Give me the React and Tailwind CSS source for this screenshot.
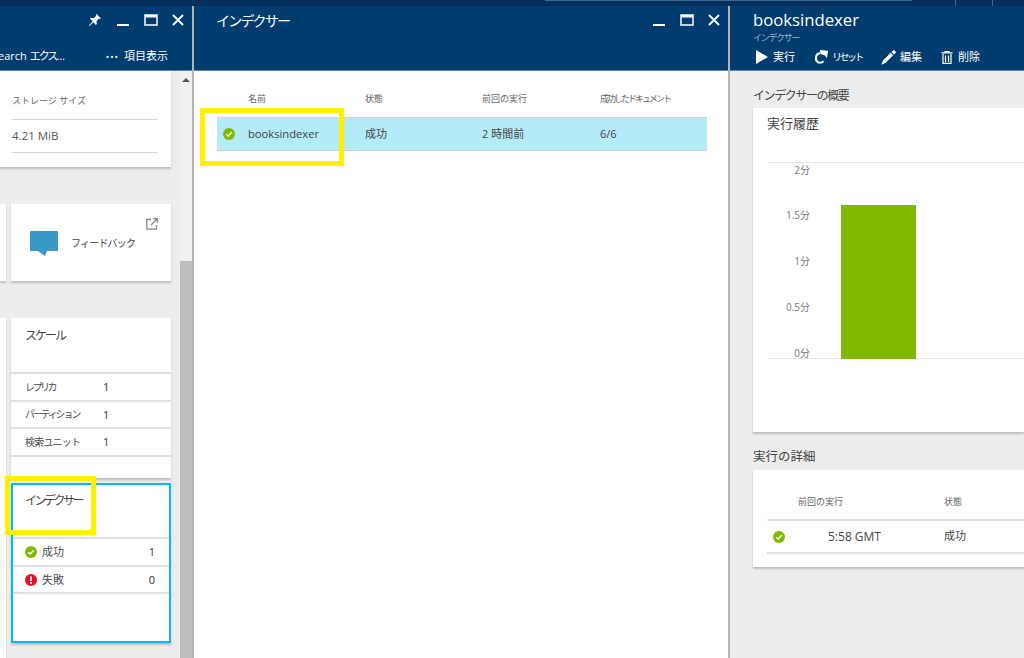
import React from "react";

const font = "font-['Open_Sans','Noto_Sans_CJK_JP',sans-serif]";

function StatusOk({ className = "" }) {
  return (
    <svg width="12" height="12" viewBox="0 0 12 12" className={className}>
      <circle cx="6" cy="6" r="6" fill="#7fba00" />
      <path d="M3.2 6.2 5.2 8l3.6-3.8" fill="none" stroke="#fff" strokeWidth="1.5" />
    </svg>
  );
}

function StatusFail() {
  return (
    <svg width="12" height="12" viewBox="0 0 12 12">
      <circle cx="6" cy="6" r="6" fill="#e81123" />
      <rect x="5.1" y="2.4" width="1.8" height="4.6" fill="#fff" />
      <rect x="5.1" y="8" width="1.8" height="1.8" fill="#fff" />
    </svg>
  );
}

function WindowButtons({ pin }) {
  return (
    <div className="flex items-end text-white">
      {pin && (
        <svg width="14" height="14" viewBox="0 0 14 14" className="mr-[15px] mb-[-1px]">
          <path d="M8.5 1 13 5.5l-1 .6-1-.5-2.5 2.7.4 2.6-1 1-2.5-2.7L1.5 13 1 12.500l3.700-4.200L2 5.800l1-1 2.600.4L8.300 2.700 8 1.700z" fill="#fff" />
        </svg>
      )}
      <svg width="12" height="12" viewBox="0 0 12 12" className="mr-[15px]">
        <rect x="0" y="10" width="12" height="2" fill="#fff" />
      </svg>
      <svg width="14" height="12" viewBox="0 0 14 12" className="mr-[14px]">
        <rect x="1" y="1" width="12" height="10" fill="none" stroke="#fff" strokeWidth="1.500" />
        <rect x="1" y="1" width="12" height="2.500" fill="#fff" />
      </svg>
      <svg width="12" height="12" viewBox="0 0 12 12">
        <path d="M1 1l10 10M11 1 1 11" stroke="#fff" strokeWidth="1.800" />
      </svg>
    </div>
  );
}

function InfoRow({ label, value, icon, wide, labelClass = "" }) {
  return (
    <div className={`flex h-[27.5px] items-center border-b-2 border-[#e0e0e0] pl-[14px] pt-[1px] text-[11px] text-[#4a4a4a] ${wide ? "justify-between pr-[16px]" : ""}`}>
      <div className={`flex items-center gap-[5px] ${wide ? "" : "w-[78px]"}`}>
        {icon}
        <span className={`whitespace-nowrap ${labelClass}`}>{label}</span>
      </div>
      <span className="text-[#333]">{value}</span>
    </div>
  );
}

function LeftBlade() {
  return (
    <div className="relative flex w-[194px] shrink-0 flex-col border-r-2 border-[#b5b5b5]">
      <div className="h-[65px] shrink-0 border-b border-[#5b86ab] bg-[#003c6e] text-white">
        <div className="flex h-[20px] items-end justify-end pr-[8px]">
          <WindowButtons pin />
        </div>
        <div className="mt-[22px] flex items-center justify-between pr-[24px] text-[11px]">
          <span className="-ml-[8px] whitespace-nowrap">
            Search <span className="tracking-[-2px]">エクス</span>…
          </span>
          <div className="flex items-center gap-[5px]">
            <span className="tracking-[1px] text-[9px]">•••</span>
            <span>項目表示</span>
          </div>
        </div>
      </div>
      <div className="flex min-h-0 flex-1 bg-[#ededed]">
        <div className="relative flex-1 overflow-hidden">
          <div className="mr-[9px] h-[96px] bg-white pl-[12px] pr-[14px] shadow-[0_2px_2px_#bdbdbd]">
            <div className="flex h-[49px] items-end border-b border-[#d5d5d5] pb-[12px] text-[9px] text-[#666]">ストレージ サイズ</div>
            <div className="flex h-[33px] items-center border-b border-[#d5d5d5] text-[11.5px] text-[#555]">4.21 MiB</div>
          </div>

          <div className="mt-[37px] flex h-[77px] gap-[5px]">
            <div className="w-[6px] bg-white shadow-[0_2px_2px_#bdbdbd]" />
            <div className="relative mr-[9px] flex flex-1 items-center bg-white pl-[19px] pt-[2px] shadow-[0_2px_2px_#bdbdbd]">
              <svg width="28" height="26" viewBox="0 0 28 26">
                <path d="M1 0h26a1 1 0 0 1 1 1v18a1 1 0 0 1-1 1h-10l-2 5-7-5H1a1 1 0 0 1-1-1V1a1 1 0 0 1 1-1z" fill="#3999c6" />
              </svg>
              <span className="ml-[13px] text-[10px] tracking-[-0.8px] text-[#444]">フィードバック</span>
              <svg width="12" height="12" viewBox="0 0 12 12" className="absolute right-[13px] top-[14px]">
                <path d="M5 1.500H.8v9.700h9.700V7M7 .7h4.300V5M11 1 5 7" fill="none" stroke="#888" strokeWidth="1.300" />
              </svg>
            </div>
          </div>

          <div className="mt-[37px] flex gap-[5px]">
            <div className="h-[340px] w-[6px] bg-white shadow-[0_2px_2px_#bdbdbd]" />
            <div className="mr-[9px] flex-1">
              <div className="h-[160px] bg-white shadow-[0_2px_2px_#bdbdbd]">
                <div className="flex h-[56px] border-b-2 border-[#e0e0e0] pl-[14px] pt-[9px] text-[12px] tracking-[-2px] text-[#444]">スケール</div>
                <InfoRow label="レプリカ" value="1" labelClass="text-[10px] tracking-[-2.5px]" />
                <InfoRow label="パーティション" value="1" labelClass="text-[10px] tracking-[-2.2px]" />
                <InfoRow label="検索ユニット" value="1" labelClass="text-[10px] tracking-[-0.8px]" />
              </div>
              <div className="mt-[5px] h-[160px] border-2 border-[#00bcf2] bg-white shadow-[0_2px_2px_#bdbdbd]">
                <div className="h-[54px] border-b-2 border-[#e0e0e0] pl-[12px] pt-[7px] text-[12px] tracking-[-2.500px] text-[#444]">インデクサー</div>
                <div className="[&>div]:pl-[12px] [&>div]:pr-[14px]">
                  <InfoRow wide label="成功" value="1" icon={<StatusOk />} />
                  <InfoRow wide label="失敗" value="0" icon={<StatusFail />} />
                </div>
              </div>
            </div>
          </div>
        </div>
        <div className="flex w-[12px] shrink-0 flex-col bg-[#f0f0f0]">
          <div className="flex h-[190px] justify-center pt-[7px]">
            <div className="h-0 w-0 border-x-[4px] border-b-[4px] border-x-transparent border-b-[#555]" />
          </div>
          <div className="flex-1 bg-[#bdbdbd]" />
        </div>
      </div>
      <div className="absolute left-[5px] top-[470px] h-[59px] w-[91px] border-[5px] border-[#fff000]" />
    </div>
  );
}

function CenterBlade() {
  return (
    <div className="relative flex w-[536px] shrink-0 flex-col border-r-2 border-[#b5b5b5] bg-white">
      <div className="flex h-[65px] shrink-0 justify-between border-b border-[#5b86ab] bg-[#003c6e] pl-[22px] pr-[8px] text-white">
        <span className="pt-[4px] text-[14px] tracking-[-1.8px]">インデクサー</span>
        <div className="flex h-[20px] items-end">
          <WindowButtons />
        </div>
      </div>
      <div className="ml-[23px] w-[490px]">
        <div className="grid h-[46px] grid-cols-[31px_117px_117px_118px_1fr] items-center pt-[10px] text-[9px] text-[#666]">
          <span />
          <span>名前</span>
          <span>状態</span>
          <span>前回の実行</span>
          <span className="tracking-[-2px]">成功したドキュメント</span>
        </div>
        <div className="grid h-[34px] grid-cols-[31px_117px_117px_118px_1fr] items-center border-y border-[#d0d0d0] bg-[#b3ebf9] text-[11px] text-[#444]">
          <StatusOk className="ml-[6px]" />
          <span className="text-[11.2px]">booksindexer</span>
          <span>成功</span>
          <span>2 時間前</span>
          <span>6/6</span>
        </div>
      </div>
      <div className="absolute left-[6px] top-[102px] h-[58px] w-[144px] border-[5px] border-[#fff000]" />
    </div>
  );
}

function Chart() {
  const ticks = [
    ["2分", 174],
    ["1.5分", 219],
    ["1分", 265],
    ["0.5分", 311],
    ["0分", 357],
  ];
  return (
    <svg width="257" height="220" viewBox="767 150 257 220" className="block" style={{ fontFamily: "Open Sans, Noto Sans CJK JP, sans-serif" }}>
      <line x1="767" x2="1024" y1="162.500" y2="162.500" stroke="#e5e5e5" />
      <line x1="767" x2="1024" y1="358.500" y2="358.500" stroke="#e5e5e5" />
      <rect x="841" y="205" width="75" height="154" fill="#7fba00" />
      {ticks.map(([label, y]) => (
        <text key={label} x="810" y={y} textAnchor="end" fontSize="10" fill="#777">
          {label}
        </text>
      ))}
    </svg>
  );
}

function RightBlade() {
  const actions = [
    {
      label: "実行",
      gap: "gap-[5px]",
      icon: (
        <svg width="12" height="14" viewBox="0 0 12 14">
          <path d="M0 0v14l12-7z" fill="#fff" />
        </svg>
      ),
    },
    {
      label: "リセット",
      gap: "gap-[4px]",
      text: "text-[10px] tracking-[-2.500px]",
      icon: (
        <svg width="14" height="14" viewBox="0 0 14 14">
          <path d="M6.500 3.200A4.900 4.900 0 0 0 5.500 12.800" fill="none" stroke="#fff" strokeWidth="2.200" />
          <path d="M6 0l8 .8-1 7.200-2.500-2.700L6.500 4z" fill="#fff" />
          <path d="M5.500 12.800c1.800.2 3-.5 4-1.500" fill="none" stroke="#fff" strokeWidth="2" />
        </svg>
      ),
    },
    {
      label: "編集",
      gap: "gap-[4px]",
      icon: (
        <svg width="15" height="15" viewBox="0 0 15 15">
          <path d="M9.700 2.800 12.200 5.300 4.500 13 .3 14.700 2 10.500z" fill="#fff" />
          <path d="M10.500 2 12 .5a1.200 1.200 0 0 1 1.600 0l.9.900a1.200 1.200 0 0 1 0 1.600L13 4.500z" fill="#fff" />
        </svg>
      ),
    },
    {
      label: "削除",
      gap: "gap-[5px]",
      icon: (
        <svg width="12" height="13" viewBox="0 0 12 13">
          <path d="M.5 1.800h11M2 3v9.300h8V3M4.500 4.500v6.500M7.500 4.500v6.500M4 1.500V.5h4v1" fill="none" stroke="#fff" strokeWidth="1.200" />
        </svg>
      ),
    },
  ];

  return (
    <div className="flex min-w-0 flex-1 flex-col bg-[#ededed]">
      <div className="h-[65px] shrink-0 border-b border-[#5b86ab] bg-[#003c6e] pl-[23px] text-white">
        <div className="pt-[2px] text-[16.700px] leading-[24px]">booksindexer</div>
        <div className="text-[9px] leading-[11px] tracking-[-1.300px] text-[#9db6cc]">インデクサー</div>
        <div className="mt-[6px] flex gap-[19px] pl-[3px] text-[11px]">
          {actions.map((a) => (
            <div key={a.label} className={`flex items-center whitespace-nowrap ${a.gap}`}>
              {a.icon}
              <span className={a.text}>{a.label}</span>
            </div>
          ))}
        </div>
      </div>
      <div className="pl-[23px]">
        <div className="flex h-[37px] items-end pb-[3px] text-[12px] tracking-[-1.400px] text-[#444]">インデクサーの概要</div>
        <div className="h-[324px] bg-white pl-[14px] shadow-[0_2px_2px_#bdbdbd]">
          <div className="h-[42px] pt-[6px] text-[13px] text-[#444]">実行履歴</div>
          <Chart />
        </div>
        <div className="flex h-[38px] items-end pb-[3px] text-[12.500px] text-[#444]">実行の詳細</div>
        <div className="h-[97px] bg-white pl-[14px] pt-[24px] shadow-[0_2px_2px_#bdbdbd]">
          <div className="grid h-[27px] grid-cols-[31px_146px_1fr] items-center border-b-2 border-[#e0e0e0] pb-[10px] text-[9px] text-[#666]">
            <span />
            <span>前回の実行</span>
            <span>状態</span>
          </div>
          <div className="grid h-[33px] grid-cols-[31px_146px_1fr] items-center border-b-2 border-[#e0e0e0] text-[11px] text-[#444]">
            <StatusOk className="ml-[6px]" />
            <span className="pl-[30px] text-[12px]">5:58 GMT</span>
            <span>成功</span>
          </div>
        </div>
      </div>
    </div>
  );
}

export default function App() {
  return (
    <div className={`flex h-[658px] w-[1024px] flex-col overflow-hidden bg-[#ededed] ${font}`}>
      <div className="relative h-[6px] shrink-0 bg-[#03305a]">
        <div className="absolute left-[545px] top-0 h-px w-[367px] bg-[#3d6a92]" />
        <div className="absolute left-[955px] top-0 h-full w-px bg-[#3d6a92]" />
        <div className="absolute left-[992px] top-0 h-full w-px bg-[#3d6a92]" />
      </div>
      <div className="flex min-h-0 flex-1">
        <LeftBlade />
        <CenterBlade />
        <RightBlade />
      </div>
    </div>
  );
}
